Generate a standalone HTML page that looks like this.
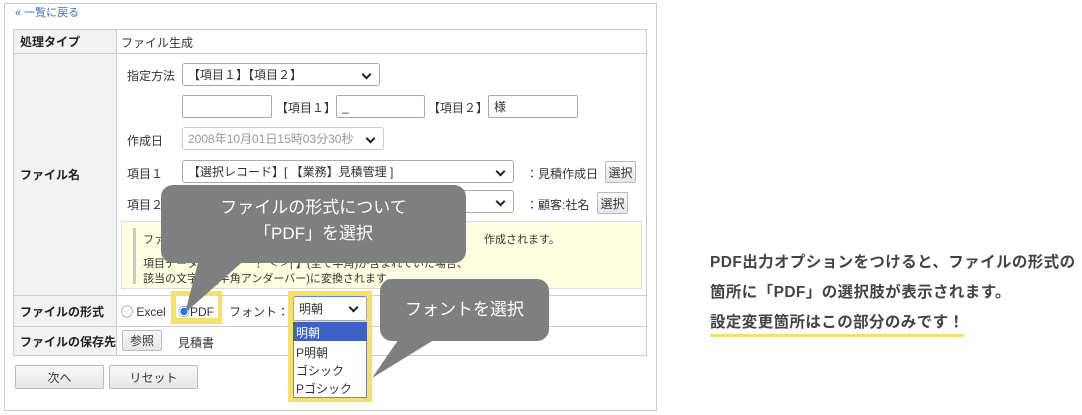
<!DOCTYPE html>
<html><head><meta charset="utf-8"><style>
*{margin:0;padding:0;box-sizing:border-box}
body{width:1082px;height:415px;background:#fff;position:relative;overflow:hidden;font-family:"Liberation Sans","Noto Sans CJK JP",sans-serif;font-size:12px;color:#333}
.a{position:absolute}
.panel{left:4px;top:3px;width:653px;height:408px;border:1px solid #ccc}
.lbl{background:#f2f2f2;font-weight:bold;color:#222;display:flex;align-items:center;padding-left:6px;font-size:12px}
.bd{border:1px solid #ccc}
.sel{border:1px solid #aaa;border-radius:3px;background:#fff;height:23px;display:flex;align-items:center;padding-left:5px;font-size:12px}
.sel::after{content:"";position:absolute;right:9px;top:7px;width:5px;height:5px;border-right:2px solid #222;border-bottom:2px solid #222;transform:rotate(45deg)}
.inp{border:1px solid #aaa;border-radius:2px;height:23px;background:#fff;padding-left:5px;display:flex;align-items:center}
.btn{border:1px solid #bbb;border-radius:2px;background:linear-gradient(#f8f8f8,#e6e6e6);display:flex;align-items:center;justify-content:center}
.call{background:#7f7f7f;color:#fff;border-radius:12px;text-align:center;font-size:17px}
.hl{background:#f5e06a}
</style></head><body>
<div class="a panel"></div>
<div class="a" style="left:15px;top:4px;color:#3a6fc4;font-size:11px">« 一覧に戻る</div>

<div class="a bd" style="left:13px;top:29px;width:634px;height:327px;background:#fff"></div>
<div class="a lbl" style="left:14px;top:30px;width:102px;height:23px">処理タイプ</div>
<div class="a" style="left:121px;top:34px">ファイル生成</div>
<div class="a" style="left:13px;top:53px;width:634px;border-top:1px solid #ccc"></div>
<div class="a lbl" style="left:14px;top:54px;width:102px;height:241px">ファイル名</div>
<div class="a" style="left:13px;top:295px;width:634px;border-top:1px solid #ccc"></div>
<div class="a lbl" style="left:14px;top:296px;width:102px;height:30px">ファイルの形式</div>
<div class="a" style="left:13px;top:326px;width:634px;border-top:1px solid #ccc"></div>
<div class="a lbl" style="left:14px;top:327px;width:102px;height:28px">ファイルの保存先</div>
<div class="a" style="left:116px;top:29px;height:327px;border-left:1px solid #ccc"></div>

<div class="a" style="left:127px;top:67px">指定方法</div>
<div class="a sel" style="left:182px;top:63px;width:198px">【項目１】【項目２】</div>
<div class="a inp" style="left:182px;top:95px;width:90px"></div>
<div class="a" style="left:276px;top:99px">【項目１】</div>
<div class="a inp" style="left:336px;top:95px;width:89px">_</div>
<div class="a" style="left:428px;top:99px">【項目２】</div>
<div class="a inp" style="left:488px;top:95px;width:90px">様</div>
<div class="a" style="left:127px;top:132px">作成日</div>
<div class="a sel" style="left:182px;top:127px;width:202px;color:#999;border-color:#ccc">2008年10月01日15時03分30秒</div>
<div class="a" style="left:127px;top:165px">項目１</div>
<div class="a sel" style="left:182px;top:160px;width:332px">【選択レコード】[ 【業務】見積管理 ]</div>
<div class="a" style="left:526px;top:165px">：見積作成日</div>
<div class="a btn" style="left:605px;top:161px;width:31px;height:22px">選択</div>
<div class="a" style="left:127px;top:196px">項目２</div>
<div class="a sel" style="left:182px;top:190px;width:332px"></div>
<div class="a" style="left:526px;top:196px">：顧客:社名</div>
<div class="a btn" style="left:597px;top:192px;width:31px;height:22px">選択</div>
<div class="a" style="left:121px;top:221px;width:521px;height:68px;background:#fefee0;border:1px solid #ddd"></div>
<div class="a" style="left:133px;top:228px;width:3px;height:56px;background:#ccc"></div>
<div class="a" style="left:143px;top:231px;font-size:11px">ファ　　　　　　　　　　　　　　　　　　　　　　　　　　　　　作成されます。</div>
<div class="a" style="left:143px;top:255px;font-size:11px">項目データに　　　　？" &lt; &gt; | 】(全て半角)が含まれていた場合、</div>
<div class="a" style="left:143px;top:270px;font-size:11px">該当の文字は_(半角アンダーバー)に変換されます。</div>

<div class="a" style="left:121px;top:303px">◯ Excel</div>
<div class="a hl" style="left:171px;top:291px;width:51px;height:33px"></div>
<div class="a" style="left:176px;top:296px;width:42px;height:22px;background:#fff"></div>
<div class="a" style="left:178px;top:303px"><span style="color:#2a6fe0">◉</span>PDF</div>
<div class="a" style="left:229px;top:303px">フォント：</div>
<div class="a hl" style="left:288px;top:291px;width:84px;height:111px"></div>
<div class="a sel" style="left:293px;top:296px;width:74px;height:25px;border-color:#aaa;border-top:1px solid #5b8ad8">明朝</div>
<div class="a" style="left:293px;top:322px;width:74px;height:76px;background:#fff;border:1px solid #888"></div>
<div class="a" style="left:293px;top:322px;width:74px;height:19px;background:#3964c6;color:#fff;padding:2px 3px">明朝</div>
<div class="a" style="left:296px;top:344px">P明朝</div>
<div class="a" style="left:296px;top:362px">ゴシック</div>
<div class="a" style="left:296px;top:380px">Pゴシック</div>

<div class="a btn" style="left:122px;top:330px;width:40px;height:21px">参照</div>
<div class="a" style="left:178px;top:334px">見積書</div>
<div class="a btn" style="left:15px;top:365px;width:89px;height:24px">次へ</div>
<div class="a btn" style="left:109px;top:365px;width:89px;height:24px">リセット</div>

<svg class="a" style="left:0;top:0" width="660" height="415"><polygon points="200,255 250,255 185,313" fill="#7f7f7f"/><polygon points="405,330 450,330 372,378" fill="#7f7f7f"/></svg>
<div class="a call" style="left:161px;top:185px;width:305px;height:78px;padding-top:10px;line-height:26px">ファイルの形式について<br>「PDF」を選択</div>
<div class="a call" style="left:380px;top:279px;width:169px;height:62px;line-height:62px">フォントを選択</div>

<div class="a" style="left:710px;top:248px;font-size:15.5px;letter-spacing:0.4px;line-height:30px;color:#444;font-weight:bold;white-space:nowrap">PDF出力オプションをつけると、ファイルの形式の<br>箇所に「PDF」の選択肢が表示されます。<br><span style="border-bottom:3px solid #f2e06a;padding-bottom:3px">設定変更箇所はこの部分のみです！</span></div>
</body></html>
